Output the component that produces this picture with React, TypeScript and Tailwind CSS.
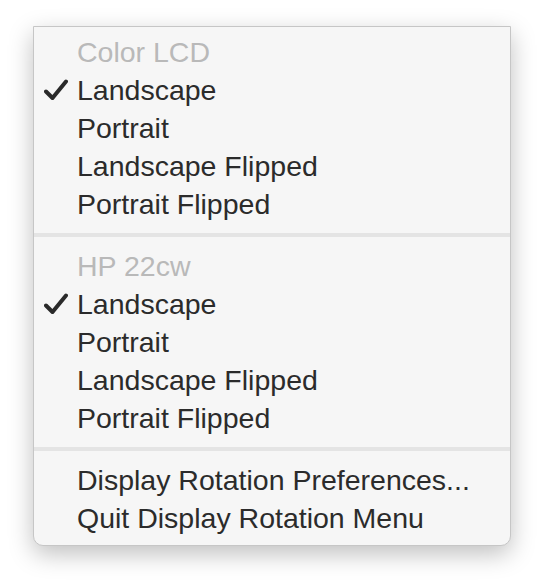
const groups = [
  { title: 'Color LCD', items: ['Landscape', 'Portrait', 'Landscape Flipped', 'Portrait Flipped'] },
  { title: 'HP 22cw', items: ['Landscape', 'Portrait', 'Landscape Flipped', 'Portrait Flipped'] },
];

function Check() {
  return (
    <svg width="24" height="22" viewBox="0 0 24 22" aria-hidden="true">
      <path d="M2 12.5 L8.5 19 L22 2.5" fill="none" stroke="#2a2a2a" strokeWidth="4" strokeLinecap="round" strokeLinejoin="round" />
    </svg>
  );
}

function Row({ label, checked, muted }: { label: string; checked?: boolean; muted?: boolean }) {
  return (
    <div className="flex h-[38px] items-center">
      <span className="flex w-[43px] justify-end pr-[9px]">{checked && <Check />}</span>
      <span className={muted ? 'text-[#b9b9b9]' : 'text-[#2b2b2b]'}>{label}</span>
    </div>
  );
}

function Separator() {
  return <div className="my-[10px] h-[4px] bg-[#e4e4e4]" />;
}

export default function App() {
  return (
    <div className="h-[588px] w-[544px] bg-white pl-[33px] pt-[26px] font-['Liberation_Sans',Arial,sans-serif] text-[28.5px] leading-none">
      <div className="w-[478px] rounded-b-[10px] border border-[#c6c6c6] bg-[#f6f6f6] pb-[8px] pt-[6px] shadow-[0_8px_24px_rgb(0_0_0_/_25%)]">
        {groups.map((group) => (
          <div key={group.title}>
            <Row label={group.title} muted />
            {group.items.map((item, index) => (
              <Row key={item} label={item} checked={index === 0} />
            ))}
            <Separator />
          </div>
        ))}
        <Row label="Display Rotation Preferences..." />
        <Row label="Quit Display Rotation Menu" />
      </div>
    </div>
  );
}
